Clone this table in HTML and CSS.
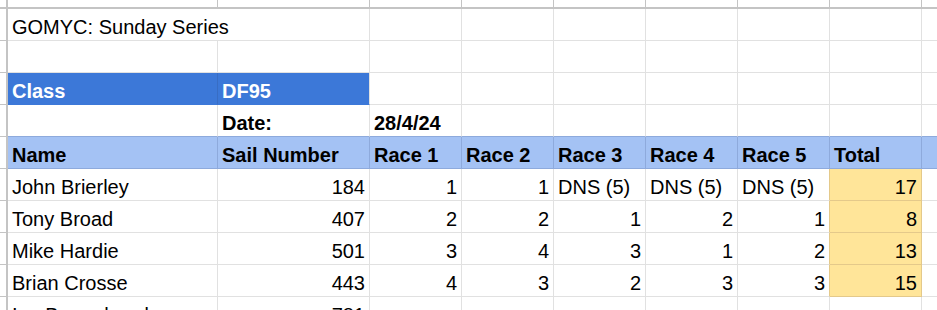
FILE: index.html
```html
<!DOCTYPE html>
<html>
<head>
<meta charset="utf-8">
<link rel="stylesheet" href="styles.css">
</head>
<body>
<div class="sheet">
  <div class="row row-top">
    <div class="c rh top"></div>
    <div class="c top"></div><div class="c top"></div><div class="c top"></div><div class="c top"></div><div class="c top"></div>
    <div class="c top"></div><div class="c top"></div><div class="c top"></div><div class="c top last"></div>
  </div>
  <div class="row">
    <div class="c rh"></div>
    <div class="c span2">GOMYC: Sunday Series</div><div class="c"></div><div class="c"></div>
    <div class="c"></div><div class="c"></div><div class="c"></div><div class="c"></div><div class="c last"></div>
  </div>
  <div class="row">
    <div class="c rh"></div>
    <div class="c"></div><div class="c"></div><div class="c"></div><div class="c"></div>
    <div class="c"></div><div class="c"></div><div class="c"></div><div class="c"></div><div class="c last"></div>
  </div>
  <div class="row">
    <div class="c rh"></div>
    <div class="c cls cls-a b">Class</div><div class="c cls b">DF95</div><div class="c"></div><div class="c"></div>
    <div class="c"></div><div class="c"></div><div class="c"></div><div class="c"></div><div class="c last"></div>
  </div>
  <div class="row">
    <div class="c rh"></div>
    <div class="c above"></div><div class="c above b">Date:</div><div class="c above b">28/4/24</div><div class="c above"></div>
    <div class="c above"></div><div class="c above"></div><div class="c above"></div><div class="c above"></div><div class="c above last"></div>
  </div>
  <div class="row">
    <div class="c rh"></div>
    <div class="c hd b">Name</div><div class="c hd b">Sail Number</div><div class="c hd b">Race 1</div><div class="c hd b">Race 2</div>
    <div class="c hd b">Race 3</div><div class="c hd b">Race 4</div><div class="c hd b">Race 5</div><div class="c hd b">Total</div><div class="c hd last"></div>
  </div>
  <div class="row">
    <div class="c rh"></div>
    <div class="c">John Brierley</div><div class="c num">184</div><div class="c num">1</div><div class="c num">1</div>
    <div class="c">DNS (5)</div><div class="c">DNS (5)</div><div class="c pre-tot">DNS (5)</div><div class="c num tot">17</div><div class="c last"></div>
  </div>
  <div class="row">
    <div class="c rh"></div>
    <div class="c">Tony Broad</div><div class="c num">407</div><div class="c num">2</div><div class="c num">2</div>
    <div class="c num">1</div><div class="c num">2</div><div class="c num pre-tot">1</div><div class="c num tot">8</div><div class="c last"></div>
  </div>
  <div class="row">
    <div class="c rh"></div>
    <div class="c">Mike Hardie</div><div class="c num">501</div><div class="c num">3</div><div class="c num">4</div>
    <div class="c num">3</div><div class="c num">1</div><div class="c num pre-tot">2</div><div class="c num tot">13</div><div class="c last"></div>
  </div>
  <div class="row">
    <div class="c rh"></div>
    <div class="c">Brian Crosse</div><div class="c num">443</div><div class="c num">4</div><div class="c num">3</div>
    <div class="c num">2</div><div class="c num">3</div><div class="c num pre-tot">3</div><div class="c num tot">15</div><div class="c last"></div>
  </div>
  <div class="row">
    <div class="c rh"></div>
    <div class="c">Ian Broomhead</div><div class="c num">781</div><div class="c"></div><div class="c"></div>
    <div class="c"></div><div class="c"></div><div class="c"></div><div class="c"></div><div class="c last"></div>
  </div>
</div>
</body>
</html>
```
FILE: styles.css
```css
html, body {
  margin: 0;
  padding: 0;
  background: #ffffff;
  overflow: hidden;
  height: 310px;
}

.sheet {
  font-family: "Liberation Sans", Arial, sans-serif;
  font-size: 20px;
  color: #000000;
}

.row {
  display: grid;
  grid-template-columns: 8px 210px 152px repeat(6, 92px) 1fr;
}

.c {
  box-sizing: border-box;
  height: 32px;
  border-right: 1px solid #e1e1e1;
  border-bottom: 1px solid #e1e1e1;
  padding: 0 4px 2px 4px;
  display: flex;
  align-items: flex-end;
  line-height: 22px;
  white-space: nowrap;
  min-width: 0;
}

.last {
  border-right: none;
}

.span2 {
  grid-column: span 2;
}

.rh {
  border-right: 2px solid #c4c4c4;
  border-bottom-color: #c4c4c4;
  padding: 0;
}

.top {
  height: 9px;
  border-bottom: 2px solid #c4c4c4;
  border-right-color: #c4c4c4;
  padding: 0;
}

.b {
  font-weight: bold;
}

.num {
  justify-content: flex-end;
}

.cls {
  background: #3c78d8;
  color: #ffffff;
  border-bottom-color: #3c78d8;
  border-right-color: #e1e1e1;
}

.cls-a {
  border-right-color: #386dc4;
}

.above {
  border-bottom-color: #8eaadc;
}

.hd {
  background: #a4c2f4;
  border-right-color: #8eaadc;
  border-bottom-color: #8eaadc;
}

.hd.last {
  border-right: none;
}

.tot {
  background: #ffe599;
  border-right-color: #e4c98a;
  border-bottom-color: #e4c98a;
}

.pre-tot {
  border-right-color: #e4c98a;
}
```
